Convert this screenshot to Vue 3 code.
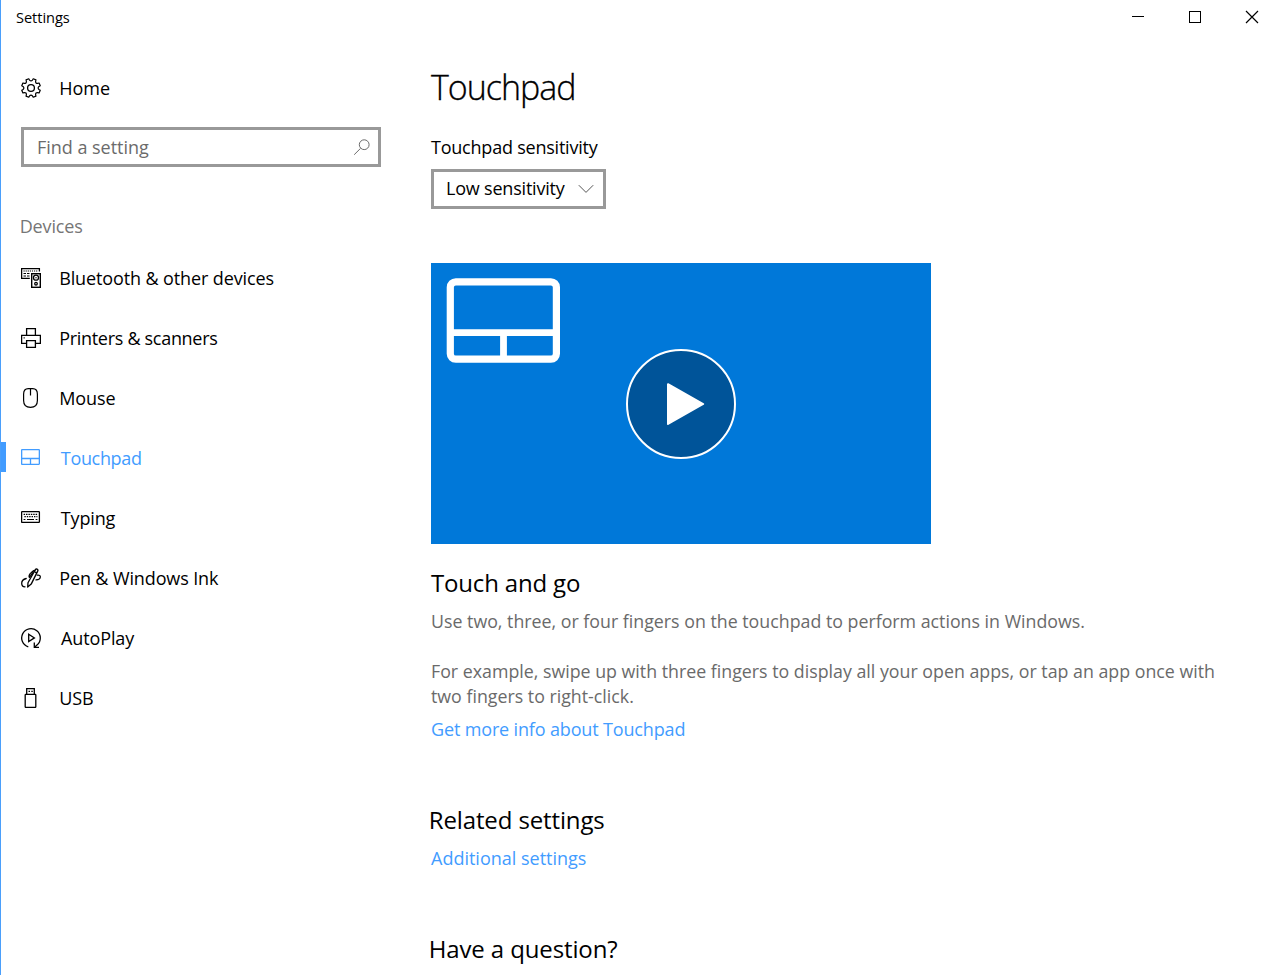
<script setup>
const navItems = [
  { id: 'bluetooth', label: 'Bluetooth & other devices' },
  { id: 'printers', label: 'Printers & scanners' },
  { id: 'mouse', label: 'Mouse' },
  { id: 'touchpad', label: 'Touchpad', active: true },
  { id: 'typing', label: 'Typing' },
  { id: 'pen', label: 'Pen & Windows Ink' },
  { id: 'autoplay', label: 'AutoPlay' },
  { id: 'usb', label: 'USB' },
]

// Gear outline: eight teeth, joined by rounded notches.
const point = (r, deg) => {
  const a = (deg * Math.PI) / 180
  return `${(10 + r * Math.cos(a)).toFixed(2)} ${(10 + r * Math.sin(a)).toFixed(2)}`
}
const gear = Array.from({ length: 8 }, (_, k) => {
  const c = 22.5 + 45 * k
  return `${k ? 'L' : 'M'}${point(9.5, c - 9)}L${point(9.5, c + 9)}L${point(8.1, c + 12)}Q${point(6.3, c + 22.5)} ${point(8.1, c + 33)}`
}).join('') + 'Z'
</script>

<template>
  <div class="window">
    <header class="titlebar">
      <span class="caption">Settings</span>
      <div class="controls">
        <svg width="57" height="36" viewBox="0 0 57 36"><path d="M23 16.5h12" /></svg>
        <svg width="57" height="36" viewBox="0 0 57 36"><rect x="23.5" y="11.5" width="11" height="11" /></svg>
        <svg width="57" height="36" viewBox="0 0 57 36"><path d="M23 11l12 12M35 11l-12 12" stroke-width="1.2" /></svg>
      </div>
    </header>

    <div class="body">
      <nav class="sidebar">
        <a class="row home">
          <svg class="icon" viewBox="0 0 20 20">
            <path :d="gear" stroke-width="1.2" stroke-linejoin="round" />
            <circle cx="10" cy="10" r="3.4" stroke-width="1.3" />
          </svg>
          <span class="label">Home</span>
        </a>

        <div class="search">
          <span class="placeholder">Find a setting</span>
          <svg width="18" height="18" viewBox="0 0 18 18"><circle cx="11.2" cy="6.7" r="4.9" /><path d="M7.6 10.3L1.2 16.7" /></svg>
        </div>

        <div class="group">Devices</div>

        <a v-for="item in navItems" :key="item.id" class="row" :class="[item.id, { active: item.active }]">
          <svg class="icon" viewBox="0 0 20 20">
            <g v-if="item.id === 'bluetooth'">
              <path d="M8.8 10.4H.6V.6H18.4V3.5" stroke-width="1.3" />
              <path d="M2.5 3H17" stroke-width="1.2" stroke-dasharray="1.2 .9" />
              <path d="M2.5 5.5H5M6 5.5H8.5M2.5 8H5M6 8H8.5" />
              <rect x="10.7" y="5.7" width="8.6" height="13.6" stroke-width="1.4" />
              <circle cx="15" cy="9.7" r="2.5" stroke-width="1.3" />
              <circle cx="15" cy="9.7" r=".7" fill="currentColor" stroke="none" />
              <circle cx="15" cy="15.7" r="1.3" stroke-width="1.3" />
            </g>
            <g v-else-if="item.id === 'printers'" stroke-width="1.3">
              <path d="M5.6 7.3V.6H14.4V7.3" />
              <path d="M5.5 15.4H.6V7.4H19.4V15.4H14.5" />
              <path d="M5.6 12.6H14.4V19.4H5.6Z" />
              <path d="M2.5 9.9h1.4" stroke-width="1" />
            </g>
            <g v-else-if="item.id === 'mouse'" stroke-width="1.2">
              <path d="M2.6 6.2C2.6 2.6 4.3.6 7.3.6H11.7C14.7.6 16.4 2.6 16.4 6.2V12.6C16.4 16.9 13.9 19.4 9.5 19.4S2.6 16.9 2.6 12.6Z" />
              <path d="M9.5.8V7.5" />
            </g>
            <g v-else-if="item.id === 'touchpad'" stroke-width="1.3">
              <rect x=".65" y="1.65" width="17.7" height="14.7" rx=".5" />
              <path d="M.6 10.5H18.4M9.5 10.5V16.3" />
            </g>
            <g v-else-if="item.id === 'typing'">
              <rect x=".6" y="3.6" width="17.8" height="10.8" rx=".6" stroke-width="1.3" />
              <path d="M2.6 6.4H17" stroke-width="1.2" stroke-dasharray="1.5 .9" />
              <path d="M3.4 8.7H16.4" stroke-width="1.2" stroke-dasharray="1.4 1" />
              <path d="M2.6 11.5H4.4M6 11.5H13M14.6 11.5H16.4" stroke-width="1.1" />
            </g>
            <g v-else-if="item.id === 'pen'" stroke-width="1.3" stroke-linejoin="round" stroke-linecap="round">
              <path d="M6.7 19L7 14.8L14.3 1.7C15.1.3 17.5 1.2 16.8 2.9L10.2 16.1Z" />
              <path d="M13.1 3.5L15.6 4.8M11.7 4.8L8.5 9.3C7.6 9 8.1 7 9.2 5.6L11.5 3.4C12.4 2.6 13.4 2.3 14 2.3" />
              <path d="M5.2 10.5C2.2 11.3.7 13.2.7 15.2C.7 17.4 2.2 18.8 4 18.8" />
              <path d="M16.3 7.1C18.3 6.8 19.4 7.7 19.3 9C19.2 10.5 17.2 11.8 15 11.9" />
            </g>
            <g v-else-if="item.id === 'autoplay'" stroke-width="1.3">
              <path d="M7.3 18.9A9.3 9.3 0 1 1 16 17.1L13.6 19.2" />
              <path d="M13.3 14.6V19.3H18" />
              <path d="M7.7 6.3L13.4 9.9L7.7 13.5Z" />
            </g>
            <g v-else stroke-width="1.3">
              <rect x="4.2" y="6.4" width="10.6" height="13" rx=".6" />
              <path d="M5.7 6V.6H13.3V6" />
              <path d="M7.5 3.4H9M10.3 3.4H11.8" stroke-width="1.3" />
            </g>
          </svg>
          <span class="label">{{ item.label }}</span>
        </a>
      </nav>

      <main class="content">
        <h1>Touchpad</h1>
        <div class="field-label">Touchpad sensitivity</div>
        <div class="select">
          <span>Low sensitivity</span>
          <svg width="16" height="10" viewBox="0 0 16 10"><path d="M.8 1.2L8 8.4L15.2 1.2" /></svg>
        </div>

        <div class="video">
          <svg width="500" height="281" viewBox="0 0 500 281">
            <rect x="19.3" y="18.8" width="106.1" height="77.4" rx="5.5" fill="none" stroke="#fff" stroke-width="7.2" />
            <path d="M19 69.6H125M72.5 69.6V96" fill="none" stroke="#fff" stroke-width="6.8" />
            <circle cx="250" cy="141" r="54" fill="#005499" stroke="#fff" stroke-width="2" />
            <path d="M237 121.2L272.2 141L237 161Z" fill="#fff" stroke="#fff" stroke-width="2" stroke-linejoin="round" />
          </svg>
        </div>

        <h2 class="touch-title">Touch and go</h2>
        <p>Use two, three, or four fingers on the touchpad to perform actions in Windows.</p>
        <p class="example">For example, swipe up with three fingers to display all your open apps, or tap an app once with two fingers to right-click.</p>
        <a class="link info">Get more info about Touchpad</a>

        <h2 class="related">Related settings</h2>
        <a class="link additional">Additional settings</a>

        <h2 class="question">Have a question?</h2>
      </main>
    </div>
  </div>
</template>

<style>
body { background: #fff; }
</style>

<style scoped>
.window {
  box-sizing: border-box;
  width: 1265px;
  height: 975px;
  overflow: hidden;
  border-left: 1px solid #4a9ffb;
  background: #fff;
  color: #000;
  font: 18px/26px "Open Sans", "Noto Sans", sans-serif;
}
svg { display: block; fill: none; stroke: currentColor; }
.titlebar { display: flex; justify-content: space-between; height: 36px; }
.caption { padding-left: 15px; font-size: 14.6px; line-height: 35px; letter-spacing: -.05px; }
.controls { display: flex; margin-right: -15px; }
.body { display: flex; }
.sidebar { width: 429px; flex: none; padding-top: 22px; }
.row { position: relative; display: flex; align-items: center; height: 60px; padding-left: 20px; }
.icon { width: 20px; height: 20px; flex: none; margin-right: 18.2px; }
.label { letter-spacing: -.12px; white-space: nowrap; }
.home .label { letter-spacing: 0; }
.printers .label { letter-spacing: -.3px; }
.mouse .label { letter-spacing: -.1px; }
.touchpad .label { margin-left: 1.6px; letter-spacing: -.32px; }
.typing .label { margin-left: 1.6px; letter-spacing: -.15px; }
.autoplay .label { margin-left: 1.8px; }
.active { color: #429cff; }
.active::before { content: ""; position: absolute; left: -1px; top: 14px; width: 6px; height: 30px; background: #429cff; }
.search {
  box-sizing: border-box;
  display: flex;
  align-items: center;
  justify-content: space-between;
  width: 360px;
  height: 40px;
  margin: 9px 0 0 20px;
  padding: 0 7px 0 13px;
  border: 3px solid #999;
  color: #6b6b6b;
}
.placeholder { letter-spacing: -.03px; }
.group { margin: 46px 0 9px 18.7px; line-height: 26px; letter-spacing: -.15px; color: #767676; }
.content { width: 800px; padding: 0 0 0 1px; }
h1, h2, p { margin: 0; font-weight: 400; }
h1 { padding-top: 28px; font-size: 34px; line-height: 46px; font-weight: 300; letter-spacing: -1px; -webkit-text-stroke: .3px #000; }
.field-label { margin-top: 24px; line-height: 26px; letter-spacing: -.22px; }
.select {
  box-sizing: border-box;
  display: flex;
  align-items: center;
  justify-content: space-between;
  width: 175px;
  height: 40px;
  margin-top: 9px;
  padding: 0 9px 2px 12px;
  border: 3px solid #999;
  letter-spacing: -.2px;
}
.select svg { margin-top: 2px; color: #555; }
.video { width: 500px; height: 281px; margin-top: 54px; background: #0078d9; }
.video svg { stroke: none; }
h2 { font-size: 24px; line-height: 34px; }
.touch-title { margin-top: 22px; letter-spacing: -.17px; }
p { margin-top: 9px; font-size: 17.8px; line-height: 25px; color: #6a6a6a; }
.example { width: 795px; margin-top: 25px; }
.link { display: block; line-height: 26px; color: #429cff; }
.info { margin-top: 7px; letter-spacing: -.15px; }
.related { margin: 61px 0 0 -2.3px; letter-spacing: -.12px; }
.additional { margin-top: 8px; }
.question { margin: 61px 0 0 -2.3px; letter-spacing: -.12px; }
</style>
